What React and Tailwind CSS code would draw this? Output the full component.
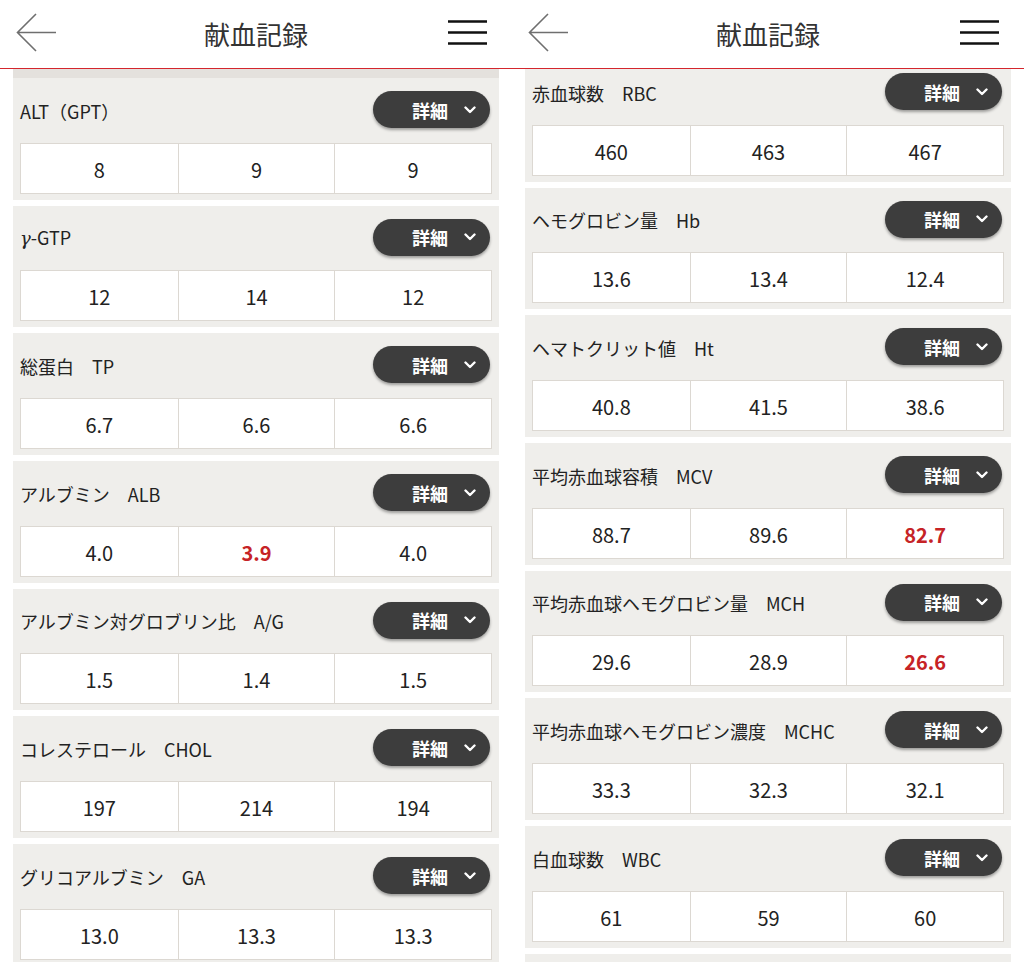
import React from "react";

const left = [
  { t: "ALT（GPT）", v: ["8", "9", "9"] },
  { t: "γ-GTP", gamma: true, v: ["12", "14", "12"] },
  { t: "総蛋白　TP", v: ["6.7", "6.6", "6.6"] },
  { t: "アルブミン　ALB", v: ["4.0", "3.9", "4.0"], red: [1] },
  { t: "アルブミン対グロブリン比　A/G", v: ["1.5", "1.4", "1.5"] },
  { t: "コレステロール　CHOL", v: ["197", "214", "194"] },
  { t: "グリコアルブミン　GA", v: ["13.0", "13.3", "13.3"] },
];

const right = [
  { t: "赤血球数　RBC", v: ["460", "463", "467"] },
  { t: "ヘモグロビン量　Hb", v: ["13.6", "13.4", "12.4"] },
  { t: "ヘマトクリット値　Ht", v: ["40.8", "41.5", "38.6"] },
  { t: "平均赤血球容積　MCV", v: ["88.7", "89.6", "82.7"], red: [2] },
  { t: "平均赤血球ヘモグロビン量　MCH", v: ["29.6", "28.9", "26.6"], red: [2] },
  { t: "平均赤血球ヘモグロビン濃度　MCHC", v: ["33.3", "32.3", "32.1"] },
  { t: "白血球数　WBC", v: ["61", "59", "60"] },
  { empty: true },
];

function Header() {
  return (
    <div className="relative h-[69px] shrink-0 bg-white border-b border-[#d4262d] flex items-center justify-center">
      <svg className="absolute left-[16px] top-[13px]" width="42" height="40" viewBox="0 0 42 40">
        <path d="M1.5 19.5 H40 M20 1 L1.5 19.5 L20 38" fill="none" stroke="#6f6f6f" strokeWidth="1.6" />
      </svg>
      <div className="text-[26px] text-[#333] leading-none mt-[-1px]">献血記録</div>
      <svg className="absolute left-[448px] top-[19px]" width="40" height="28" viewBox="0 0 40 28">
        <path d="M0 2.5 H39 M0 13.5 H39 M0 24.5 H39" stroke="#111" strokeWidth="2.6" />
      </svg>
    </div>
  );
}

function Card({ item }) {
  if (item.empty) return <div className="h-[121.7px] shrink-0 bg-[#efeeeb]" />;
  const red = item.red || [];
  return (
    <div className="h-[121.7px] shrink-0 bg-[#efeeeb] px-[7px] pt-[13px]">
      <div className="h-[37px] flex items-center justify-between">
        <div className="text-[18px] text-[#222] leading-none mt-[2px]">
          {item.gamma ? (
            <span>
              <span className="italic font-['DejaVu_Serif']">γ</span>-GTP
            </span>
          ) : (
            item.t
          )}
        </div>
        <div className="mr-[2px] w-[117px] h-[37px] rounded-full bg-[#3d3d3d] shadow-[0_2px_3px_rgba(0,0,0,0.35)] flex items-center justify-end pr-[14px]">
          <span className="text-white font-bold text-[18px] leading-none mr-[16px]">詳細</span>
          <svg width="12" height="8" viewBox="0 0 12 8">
            <path d="M1.5 1.5 L6 6 L10.5 1.5" fill="none" stroke="white" strokeWidth="2.4" strokeLinecap="round" strokeLinejoin="round" />
          </svg>
        </div>
      </div>
      <div className="mt-[14.7px] h-[51px] grid grid-cols-3 border border-[#dcd8d2] bg-white">
        {item.v.map((v, i) => (
          <div
            key={i}
            className={
              "flex items-center justify-center pt-[3px] text-[20px] leading-none " +
              (i > 0 ? "border-l border-[#dcd8d2] " : "") +
              (red.includes(i) ? "text-[#c62326] font-bold" : "text-[#222]")
            }
          >
            {v}
          </div>
        ))}
      </div>
    </div>
  );
}

function Panel({ items, offset, strip }) {
  return (
    <div className="w-[512px] h-[962px] bg-white flex flex-col overflow-hidden">
      <Header />
      <div className="flex-1 overflow-hidden px-[13px]">
        {strip && <div className="h-[9px] bg-[#e4e1dd]" />}
        <div className={"flex flex-col gap-[6px] " + (offset ? "mt-[-9px]" : "")}>
          {items.map((it, i) => (
            <Card key={i} item={it} />
          ))}
        </div>
      </div>
    </div>
  );
}

export default function App() {
  return (
    <div className="w-[1024px] h-[962px] flex bg-white overflow-hidden font-['Noto_Sans_CJK_JP',sans-serif]">
      <Panel items={left} strip />
      <Panel items={right} offset />
    </div>
  );
}
